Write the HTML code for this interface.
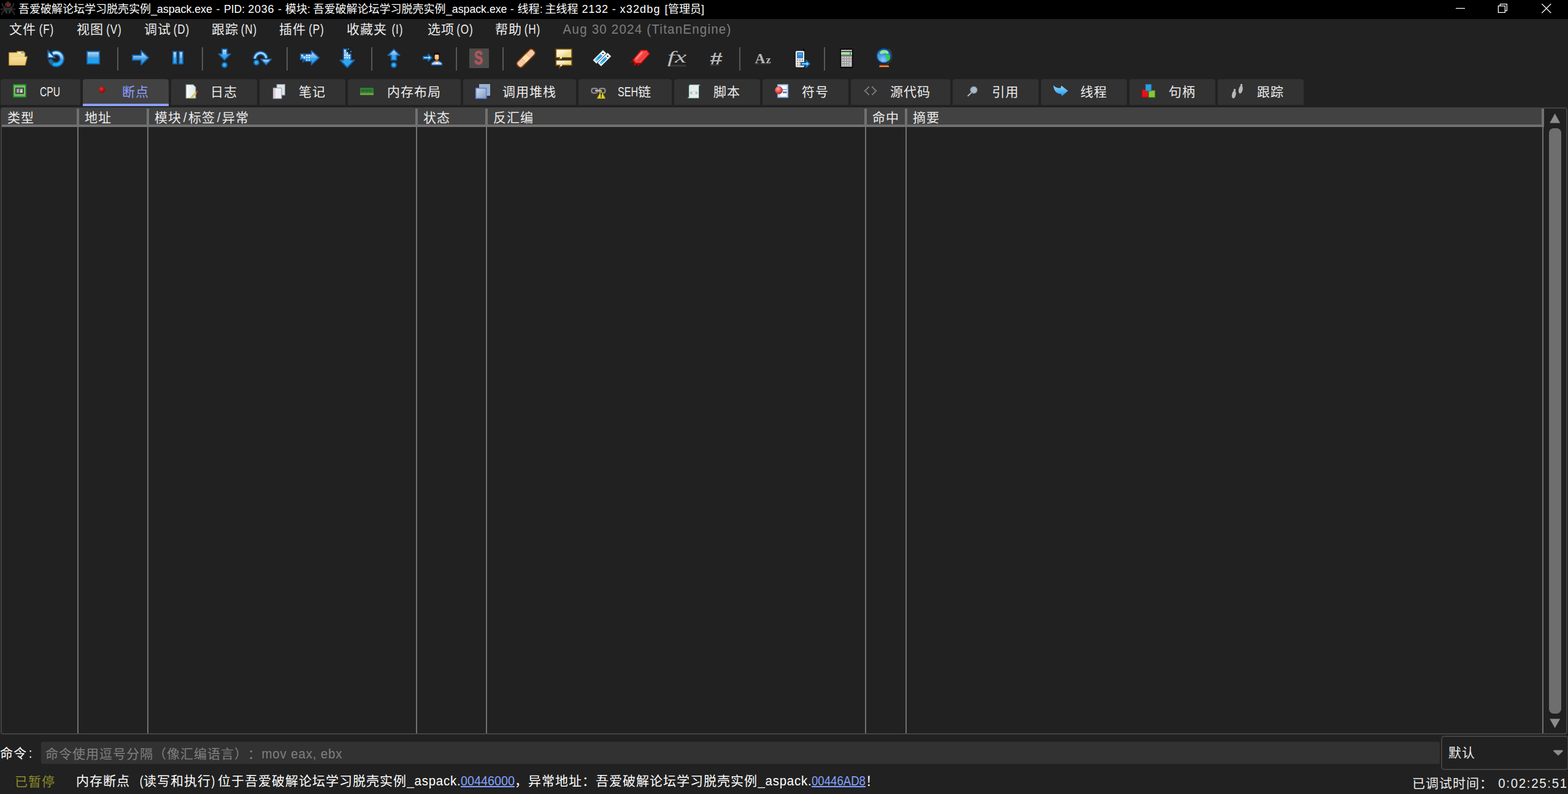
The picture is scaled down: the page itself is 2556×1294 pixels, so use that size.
<!DOCTYPE html>
<html lang="zh-CN">
<head>
<meta charset="utf-8">
<title>x32dbg</title>
<style>
*{box-sizing:border-box}
html,body{margin:0;padding:0}
html{background:#212121;overflow:hidden}
#app{position:absolute;left:0;top:0;width:2556px;height:1294px;overflow:hidden;background:#212121}
body{width:2556px;height:1294px;overflow:hidden;position:relative;background:#212121;color:#ececec;
 font-family:"Liberation Sans","Noto Sans CJK SC",sans-serif;font-size:22px;}
.a{position:absolute}
.t{position:absolute;white-space:pre;text-spacing-trim:space-all;height:30px;line-height:30px;font-size:21px;letter-spacing:1px;font-weight:400}
.q{display:inline-block;white-space:pre;line-height:1;vertical-align:baseline;letter-spacing:0;font-size:22px}
.q>span{display:inline-block;transform-origin:0 50%}
#title{left:0;top:0;width:2556px;height:31px;background:#000}
#title .tt{position:absolute;left:30px;top:0;height:31px;line-height:31px;font-size:18px;color:#fff;white-space:pre}
#title .q{font-size:18px}
.tab{position:absolute;top:129px;height:42px;background:#323232;border-radius:4px 4px 0 0}
.tab.sel{background:#424242;height:44px;border-bottom:4px solid #8c9eff;color:#8c9eff;border-radius:4px 4px 0 0}
.tab .t{top:6px}
.sep{position:absolute;top:77px;width:2px;height:38px;background:#585858}
.hs{position:absolute;top:177px;width:4px;height:30px;background:#717171}
.cl{position:absolute;top:207px;width:2px;height:988px;background:#717171}
a{color:#86a1ff;text-decoration:none;position:relative;display:inline-block;line-height:1}
a::after{content:"";position:absolute;left:0;right:0;bottom:1px;height:2px;background:#86a1ff}
</style>
</head>
<body>
<div id="app">
<div id="title" class="a"><svg class="a" style="left:0;top:0" width="27" height="27" viewBox="0 0 27 27"><g fill="none" stroke="#313131" stroke-width="1.9" stroke-linecap="round"><path d="M8.5 12.5 C5 11 3.7 8.5 3.7 5.6"/><path d="M17.5 12.5 C21 11 22.3 8.5 22.3 5.6"/><path d="M1.6 14.9 H24.4"/><path d="M7.5 17 C4.5 18.5 3 21 2.7 23.5"/><path d="M18.5 17 C21.5 18.5 23 21 23.3 23.5"/></g><path d="M13 2 C14.5 3.6 18.2 4.4 18.2 7.4 C18.2 10 15.9 11.4 13 11.4 C10.1 11.4 7.8 10 7.8 7.4 C7.8 4.4 11.5 3.6 13 2 Z" fill="#313131"/><path d="M5.8 11.5 C8.5 12.9 17.5 12.9 20.2 11.5 C19.6 15.6 18.4 19 16.6 21.3 L14 23.3 L13.7 14.2 H12.3 L12 23.3 L9.4 21.3 C7.6 19 6.4 15.6 5.8 11.5 Z" fill="#313131"/><text x="13.3" y="9.8" font-family="Liberation Sans,sans-serif" font-weight="700" font-size="5.8" fill="#e60000" text-anchor="middle" textLength="5.6" lengthAdjust="spacingAndGlyphs">52</text></svg><div class="tt">吾爱破解论坛学习脱壳实例<span class="l" style="letter-spacing:-0.1px;margin:0 0.05px 0 -0.05px">_aspack.exe</span><span class="l" style="letter-spacing:1px;margin:0 -0.5px 0 0.5px"> - </span><span class="q" style="width:34px"><span style="transform:scaleX(0.971)">PID:</span></span><span class="l" style="letter-spacing:0px;margin:0 0px 0 0px"> </span><span class="l" style="letter-spacing:0.74px;margin:0 -0.37px 0 0.37px">2036</span><span class="l" style="letter-spacing:0.67px;margin:0 -0.33px 0 0.33px"> - </span>模块<span class="q" style="width:9.5px"><span style="transform:scaleX(0.950)">: </span></span>吾爱破解论坛学习脱壳实例<span class="q" style="width:99.5px"><span style="transform:scaleX(0.984)">_aspack.exe</span></span><span class="l" style="letter-spacing:0.5px;margin:0 -0.25px 0 0.25px"> - </span>线程<span class="q" style="width:9px"><span style="transform:scaleX(0.900)">: </span></span>主线程<span class="l" style="letter-spacing:0.5px;margin:0 -0.25px 0 0.25px"> </span><span class="l" style="letter-spacing:0.86px;margin:0 -0.43px 0 0.43px">2132</span><span class="l" style="letter-spacing:0.83px;margin:0 -0.42px 0 0.42px"> - </span><span class="l" style="letter-spacing:1.16px;margin:0 -0.58px 0 0.58px">x32dbg</span><span class="l" style="letter-spacing:2px;margin:0 -1px 0 1px"> </span><span class="l" style="letter-spacing:1px;margin:0 -0.5px 0 0.5px">[</span>管理员<span class="l" style="letter-spacing:0px;margin:0 0px 0 0px">]</span></div><svg class="a" style="left:2360px;top:0" width="196" height="31" viewBox="2360 0 196 31" fill="none" stroke="#fff" stroke-width="1.25"><path d="M2373 13.6 H2388"/><path d="M2442.4 9.6 H2453.4 V20.4 H2442.4 Z M2445.4 9.6 V6.6 H2456.4 V17.4 H2453.4"/><path d="M2513.3 6.3 L2528.3 21.3 M2528.3 6.3 L2513.3 21.3"/></svg></div>
<div id="menu">
<div class="t" style="left:15px;top:33px">文件<span class="q" style="width:33px"><span style="transform:scaleX(0.78);letter-spacing:1px;padding-left:6.11px">(F)</span></span></div>
<div class="t" style="left:125px;top:33px">视图<span class="q" style="width:33px"><span style="transform:scaleX(0.78);letter-spacing:1px;padding-left:5.49px">(V)</span></span></div>
<div class="t" style="left:235px;top:33px">调试<span class="q" style="width:33px"><span style="transform:scaleX(0.78);letter-spacing:1px;padding-left:4.88px">(D)</span></span></div>
<div class="t" style="left:345px;top:33px">跟踪<span class="q" style="width:33px"><span style="transform:scaleX(0.78);letter-spacing:1px;padding-left:4.88px">(N)</span></span></div>
<div class="t" style="left:455px;top:33px">插件<span class="q" style="width:33px"><span style="transform:scaleX(0.78);letter-spacing:1px;padding-left:5.49px">(P)</span></span></div>
<div class="t" style="left:565px;top:33px">收藏夹<span class="q" style="width:33px"><span style="transform:scaleX(0.78);letter-spacing:1px;padding-left:9.77px">(I)</span></span></div>
<div class="t" style="left:697px;top:33px">选项<span class="q" style="width:33px"><span style="transform:scaleX(0.78);letter-spacing:1px;padding-left:4.27px">(O)</span></span></div>
<div class="t" style="left:807px;top:33px">帮助<span class="q" style="width:33px"><span style="transform:scaleX(0.78);letter-spacing:1px;padding-left:4.88px">(H)</span></span></div>
<div class="t" style="left:917px;top:33px;color:#7d7d7d"><span class="q" style="width:275px"><span style="transform:scaleX(0.93);letter-spacing:1.34px;padding-left:0.67px">Aug 30 2024 (TitanEngine)</span></span></div>
</div>
<div id="toolbar">
<svg class="a" style="left:0;top:70px" width="1480" height="50" viewBox="0 70 1480 50"><defs><linearGradient id="gb" x1="0" y1="0" x2="0" y2="1"><stop offset="0" stop-color="#b6e7ff"/><stop offset=".5" stop-color="#6db3ea"/><stop offset=".55" stop-color="#3f9fe6"/><stop offset="1" stop-color="#10b4ff"/></linearGradient><linearGradient id="gb2" x1="0" y1="0" x2="0" y2="1"><stop offset="0" stop-color="#a9e2ff"/><stop offset=".45" stop-color="#5aa5de"/><stop offset=".5" stop-color="#3d97db"/><stop offset="1" stop-color="#00adff"/></linearGradient><linearGradient id="gf" x1="0" y1="0" x2="0" y2="1"><stop offset="0" stop-color="#f6e09a"/><stop offset="1" stop-color="#ecc979"/></linearGradient><linearGradient id="gc" x1="0" y1="0" x2="1" y2="1"><stop offset="0" stop-color="#fffaec"/><stop offset=".4" stop-color="#faedc8"/><stop offset=".7" stop-color="#e6da86"/><stop offset="1" stop-color="#efe6ae"/></linearGradient><radialGradient id="gg" cx=".45" cy=".8" r=".9"><stop offset="0" stop-color="#8cc8ff"/><stop offset=".5" stop-color="#3a8fe0"/><stop offset="1" stop-color="#1662b8"/></radialGradient><linearGradient id="gt" x1="0" y1="0" x2="1" y2="0"><stop offset="0" stop-color="#7fd0f8"/><stop offset=".4" stop-color="#1a98e4"/><stop offset=".75" stop-color="#38b4f4"/><stop offset="1" stop-color="#c8ecff"/></linearGradient><radialGradient id="gd" cx=".45" cy=".4" r=".6"><stop offset="0" stop-color="#35c8ff"/><stop offset="1" stop-color="#1a8ee0"/></radialGradient></defs><path d="M14.6 85.6 H27.6 V83.6 H38.6 V85.6 H40.6 V92.2 H44.4 L41 106.4 H14.6 Z" fill="#e8c672" stroke="#a67c30" stroke-width="1.4" stroke-linejoin="round"/><path d="M15.4 86.6 H39.8 V92.6 H19.6 L15.4 105 Z" fill="#f1d98d"/><path d="M19.4 93 H43.6 L40.4 105.7 H15.6 Z" fill="url(#gf)"/><rect x="29" y="85" width="5.5" height="2" fill="#f6f2ea"/><rect x="34.5" y="85" width="3" height="2" fill="#4dbcf2"/><path d="M85.79 87.74 A9.6 9.6 0 1 1 81.74 96.44" fill="none" stroke="#1c63ad" stroke-width="8.4" opacity=".95"/><path d="M86.21 87.46 A9.6 9.6 0 1 1 81.79 96.94" fill="none" stroke="url(#gb)" stroke-width="4.6"/><path d="M86.79 104.08 A9.6 9.6 0 0 1 81.72 96.27" fill="none" stroke="#212121" stroke-width="9" opacity=".42"/><path d="M78.2 82.6 V94 H89.6 Z" fill="#b8e6ff" stroke="#1c63ad" stroke-width="2.2" stroke-linejoin="round"/><rect x="142" y="84" width="20" height="20" fill="url(#gb2)" stroke="#1c63ad" stroke-width="2"/><path d="M216 90 H230 V82.5 L242 94 L230 105.5 V98 H216 Z" fill="url(#gb)" stroke="#1c63ad" stroke-width="2" stroke-linejoin="round"/><rect x="282" y="84" width="6" height="20" fill="url(#gb)" stroke="#1c63ad" stroke-width="2" stroke-linejoin="round"/><rect x="292" y="84" width="6" height="20" fill="url(#gb)" stroke="#1c63ad" stroke-width="2" stroke-linejoin="round"/><path d="M362 80 H370 V88 H375.5 L366 97.8 L356.5 88 H362 Z" fill="url(#gb)" stroke="#1c63ad" stroke-width="2" stroke-linejoin="round"/><circle cx="366" cy="106" r="4" fill="url(#gd)" stroke="#1c63ad" stroke-width="2"/><path d="M415.51 95.92 A9.3 9.3 0 0 1 434.01 94.31" fill="none" stroke="#1c63ad" stroke-width="6.6"/><path d="M415.50 95.60 A9.3 9.3 0 0 1 434.06 94.79" fill="none" stroke="#9ad6fb" stroke-width="3"/><path d="M425.3 96.6 H442.2 L433.8 105.6 Z" fill="url(#gb)" stroke="#1c63ad" stroke-width="2" stroke-linejoin="round"/><circle cx="418" cy="102" r="4" fill="url(#gd)" stroke="#1c63ad" stroke-width="2"/><path d="M490 88 H495.5 V90 H497.5 V88 H507.5 V82.5 L520 94 L507.5 105.5 V100 H497.5 V98 H494 V96 H490 Z" fill="url(#gb)" stroke="#1c63ad" stroke-width="2" stroke-linejoin="round"/><rect x="491" y="89" width="2" height="2" fill="#d9f3ff"/><rect x="499" y="89" width="2" height="2" fill="#d9f3ff"/><rect x="503" y="89" width="2" height="2" fill="#d9f3ff"/><rect x="495" y="93" width="2" height="2" fill="#d9f3ff"/><rect x="499" y="93" width="2" height="2" fill="#d9f3ff"/><rect x="503" y="93" width="2" height="2" fill="#d9f3ff"/><rect x="499" y="97" width="2" height="2" fill="#d9f3ff"/><rect x="503" y="97" width="2" height="2" fill="#d9f3ff"/><rect x="489" y="95.5" width="2" height="2" fill="#2a7ac8"/><rect x="493" y="99.5" width="2" height="2" fill="#2a7ac8"/><path d="M560 80 H565 V86 H568 V88 H572 V98 H577.5 L566 110 L554.5 98 H560 Z" fill="url(#gb)" stroke="#1c63ad" stroke-width="2" stroke-linejoin="round"/><rect x="561" y="81" width="2" height="2" fill="#d9f3ff"/><rect x="565" y="85" width="2" height="2" fill="#d9f3ff"/><rect x="561" y="89" width="2" height="2" fill="#d9f3ff"/><rect x="565" y="89" width="2" height="2" fill="#d9f3ff"/><rect x="569" y="89" width="2" height="2" fill="#d9f3ff"/><rect x="561" y="93" width="2" height="2" fill="#d9f3ff"/><rect x="565" y="93" width="2" height="2" fill="#d9f3ff"/><rect x="569" y="93" width="2" height="2" fill="#d9f3ff"/><rect x="567" y="79" width="2" height="2" fill="#3a92e0"/><rect x="571" y="83" width="2" height="2" fill="#3a92e0"/><path d="M642 80.4 L651.6 90.3 H646.2 V98 H637.8 V90.3 H632.4 Z" fill="url(#gb)" stroke="#1c63ad" stroke-width="2" stroke-linejoin="round"/><circle cx="642" cy="106" r="4" fill="url(#gd)" stroke="#1c63ad" stroke-width="2"/><path d="M690 92 H698 V88.6 L704 94 L698 99.4 V96 H690 Z" fill="#7fdcff" stroke="#1c63ad" stroke-width="2" stroke-linejoin="round"/><path d="M703.5 106 V102.5 L708.5 99.5 H715.5 L720.5 102.5 V106 Z" fill="#b4d4f4" stroke="#1d5aa8" stroke-width="1.6"/><rect x="710.2" y="95" width="3.8" height="6.5" fill="#b9691c"/><rect x="711" y="101" width="2.4" height="3" fill="#fff"/><path d="M707 96 V88 C707 84 717 84 717 88 V96 H715.5 V90 H708.6 V96 Z" fill="#1e0d0a"/><rect x="708.6" y="89" width="6.8" height="7.6" rx="1.5" fill="#f3c791"/><rect x="765" y="79" width="32" height="32" fill="#4e4c4a"/><text x="780" y="105.2" font-family="Liberation Sans,sans-serif" font-weight="700" font-size="31" fill="#ae565c" stroke="#ae565c" stroke-width="1.2" text-anchor="middle" textLength="14" lengthAdjust="spacingAndGlyphs">S</text><g transform="rotate(-45 857.3 95)"><rect x="839.3" y="89.2" width="36" height="11.6" rx="4.6" fill="#f3c8a6" stroke="#7c3c0a" stroke-width="2"/><rect x="853" y="90.2" width="9" height="9.6" fill="#ffdfa6"/><path d="M852.3 92 V98 M863 92 V98" stroke="#f0a78a" stroke-width="1.4" stroke-dasharray="1.5 1.5"/></g><path d="M912 94 V97 L916 94" fill="#fff6dc" stroke="#80520e" stroke-width="1.6"/><rect x="906.3" y="80" width="25.7" height="14" fill="url(#gc)" stroke="#80520e" stroke-width="1.7"/><path d="M912.3 106 V110.5 L916 106" fill="#fff6dc" stroke="#80520e" stroke-width="1.6"/><rect x="906.3" y="98" width="25.7" height="8.4" fill="url(#gc)" stroke="#80520e" stroke-width="1.7"/><rect x="913" y="93" width="3" height="2.4" fill="#fff6dc"/><rect x="913.2" y="105.4" width="3" height="2.4" fill="#fff6dc"/><g transform="rotate(-45 977.6 92.6)"><rect x="967.1" y="89.6" width="21" height="6" fill="#249fe8" stroke="#24424a" stroke-width="3.6"/><rect x="967.1" y="89.6" width="21" height="6" fill="url(#gt)" stroke="#fff" stroke-width="1.8"/><rect x="982.1" y="89.6" width="6" height="6" fill="#fff"/><circle cx="985.2" cy="92.6" r="1.2" fill="#000"/></g><g transform="rotate(-45 985.2 97)"><rect x="974.7" y="94" width="21" height="6" fill="#249fe8" stroke="#24424a" stroke-width="3.6"/><rect x="974.7" y="94" width="21" height="6" fill="url(#gt)" stroke="#fff" stroke-width="1.8"/><rect x="989.7" y="94" width="6" height="6" fill="#fff"/><circle cx="992.8" cy="97" r="1.2" fill="#000"/></g><path d="M1027.2 99.7 H1033 V101.2 H1027.2 Z M1033.4 100 H1037 V107 H1033.4 Z M1039.2 101.6 H1042.3 V107 H1039.2 Z" fill="#b40404"/><path d="M1031.8 97.8 L1044.8 82 H1054.6 L1058.6 87.8 L1044.8 103 H1036 Z" fill="#f24a4a" stroke="#cc0808" stroke-width="1.6" stroke-linejoin="round"/><path d="M1040.4 99.4 L1054.6 86.4" stroke="#e82020" stroke-width="1.5" stroke-dasharray="2 1.5"/><path d="M1036.4 96.4 L1047 85" stroke="#ff8a8a" stroke-width="2.4"/><rect x="1089" y="105.6" width="29" height="3" fill="#393939"/><text x="1088" y="102.4" font-family="Liberation Serif,serif" font-style="italic" font-size="27.5" fill="#bcbcbc" textLength="31" lengthAdjust="spacingAndGlyphs">fx</text><rect x="1157" y="105.2" width="16" height="2" fill="#383838"/><text x="1167" y="105.4" font-family="Liberation Sans,sans-serif" font-style="italic" font-weight="700" font-size="28.5" fill="#b8b8b8" text-anchor="middle" textLength="21" lengthAdjust="spacingAndGlyphs">#</text><rect x="1230" y="103.4" width="26" height="1.6" fill="#343434"/><text x="1230.6" y="103" font-family="Liberation Serif,serif" font-weight="700" font-size="24" fill="#b8b8b8" textLength="17" lengthAdjust="spacingAndGlyphs">A</text><text x="1248.6" y="103" font-family="Liberation Serif,serif" font-weight="700" font-size="17.5" fill="#b8b8b8" textLength="8" lengthAdjust="spacingAndGlyphs">z</text><rect x="1309" y="79.4" width="2" height="4" fill="#050505"/><rect x="1297.5" y="83.5" width="13" height="25.5" rx="1" fill="#e4e2e0" stroke="#f6f4f2" stroke-width="1"/><rect x="1299.2" y="85.2" width="9.8" height="9.8" fill="#2c83d0"/><rect x="1301" y="87" width="6" height="3" fill="#5aa8e4"/><rect x="1299" y="97" width="2" height="2" fill="#8e8e8e"/><rect x="1303" y="97" width="2" height="2" fill="#8e8e8e"/><rect x="1307" y="97" width="2" height="2" fill="#8e8e8e"/><rect x="1299" y="101" width="2" height="2" fill="#8e8e8e"/><rect x="1303" y="101" width="2" height="2" fill="#8e8e8e"/><rect x="1307" y="101" width="2" height="2" fill="#8e8e8e"/><rect x="1299" y="105" width="2" height="2" fill="#8e8e8e"/><rect x="1303" y="105" width="2" height="2" fill="#8e8e8e"/><rect x="1307" y="105" width="2" height="2" fill="#8e8e8e"/><path d="M1306 102 H1314 V98.2 L1320 104 L1314 109.8 V106 H1306 Z" fill="#74dcff" stroke="#1c63ad" stroke-width="2" stroke-linejoin="round"/><rect x="1369.5" y="79.5" width="21" height="31.3" fill="#000"/><rect x="1371" y="81" width="18" height="28" fill="#9b9b9b"/><rect x="1371" y="81" width="18" height="2" fill="#b9b9b9"/><rect x="1371" y="83" width="18" height="2" fill="#565456"/><rect x="1371" y="85" width="18" height="4" fill="#a2e2a2"/><rect x="1385" y="85" width="2" height="4" fill="#5c9a5c"/><rect x="1371" y="89" width="18" height="2" fill="#6e6c6e"/><rect x="1373" y="93" width="2.2" height="2.2" fill="#d6d6d6"/><rect x="1377" y="93" width="2.2" height="2.2" fill="#d6d6d6"/><rect x="1381" y="93" width="2.2" height="2.2" fill="#d6d6d6"/><rect x="1385" y="93" width="2.2" height="2.2" fill="#d6d6d6"/><rect x="1373" y="97" width="2.2" height="2.2" fill="#d6d6d6"/><rect x="1377" y="97" width="2.2" height="2.2" fill="#d6d6d6"/><rect x="1381" y="97" width="2.2" height="2.2" fill="#d6d6d6"/><rect x="1385" y="97" width="2.2" height="2.2" fill="#d6d6d6"/><rect x="1373" y="101" width="2.2" height="2.2" fill="#d6d6d6"/><rect x="1377" y="101" width="2.2" height="2.2" fill="#d6d6d6"/><rect x="1381" y="101" width="2.2" height="2.2" fill="#d6d6d6"/><rect x="1373" y="105" width="2.2" height="2.2" fill="#d6d6d6"/><rect x="1377" y="105" width="2.2" height="2.2" fill="#d6d6d6"/><rect x="1381" y="105" width="2.2" height="2.2" fill="#d6d6d6"/><rect x="1385" y="101" width="2.2" height="6.2" fill="#cfcfcf"/><path d="M1448 79.5 C1456 84 1456 98 1446 104.5" fill="none" stroke="#3a3a3a" stroke-width="1.8"/><circle cx="1440.8" cy="91" r="11.4" fill="url(#gg)" stroke="#0e4c96" stroke-width="1.6"/><path d="M1434 86 C1435 82 1440 81 1443 82 C1447 82 1449 85 1448 87 C1446 89 1444 86 1441 87 C1438 88 1435 89 1434 86 Z" fill="#8de89a"/><path d="M1445 89 C1448 88 1451 91 1451 95 C1450 98 1448 100 1446 99 C1447 96 1444 94 1443 91 Z" fill="#2fd238"/><path d="M1431 89 C1433 88 1434 90 1433 92 C1432 92 1431 91 1431 89 Z" fill="#3fc870"/><rect x="1434" y="105.4" width="14" height="2" fill="#8a3a00"/><rect x="1433.4" y="107.2" width="15.6" height="2" fill="#f2a766"/><rect x="1433.4" y="109.2" width="15.6" height="1.6" fill="#6c1600"/></svg>
<div class="sep" style="left:191px"></div>
<div class="sep" style="left:329px"></div>
<div class="sep" style="left:467px"></div>
<div class="sep" style="left:605px"></div>
<div class="sep" style="left:743px"></div>
<div class="sep" style="left:819px"></div>
<div class="sep" style="left:1205px"></div>
<div class="sep" style="left:1343px"></div>
</div>
<div id="tabs">
<div class="tab" style="left:1px;width:130px"><div class="t" style="left:64px"><span class="q" style="width:33px"><span style="transform:scaleX(0.71)">CPU</span></span></div></div>
<div class="tab sel" style="left:135px;width:140px"><div class="t" style="left:64px">断点</div></div>
<div class="tab" style="left:279px;width:140px"><div class="t" style="left:64px">日志</div></div>
<div class="tab" style="left:423px;width:140px"><div class="t" style="left:64px">笔记</div></div>
<div class="tab" style="left:567px;width:184px"><div class="t" style="left:64px">内存布局</div></div>
<div class="tab" style="left:755px;width:184px"><div class="t" style="left:64px">调用堆栈</div></div>
<div class="tab" style="left:943px;width:152px"><div class="t" style="left:64px"><span class="q" style="width:33px"><span style="transform:scaleX(0.729)">SEH</span></span>链</div></div>
<div class="tab" style="left:1099px;width:140px"><div class="t" style="left:64px">脚本</div></div>
<div class="tab" style="left:1243px;width:140px"><div class="t" style="left:64px">符号</div></div>
<div class="tab" style="left:1387px;width:162px"><div class="t" style="left:64px">源代码</div></div>
<div class="tab" style="left:1553px;width:140px"><div class="t" style="left:64px">引用</div></div>
<div class="tab" style="left:1697px;width:140px"><div class="t" style="left:64px">线程</div></div>
<div class="tab" style="left:1841px;width:140px"><div class="t" style="left:64px">句柄</div></div>
<div class="tab" style="left:1985px;width:140px"><div class="t" style="left:64px">跟踪</div></div>
<svg class="a" style="left:0;top:129px" width="2130" height="44" viewBox="0 129 2130 44"><defs><radialGradient id="rr" cx=".4" cy=".35" r=".7"><stop offset="0" stop-color="#e23a3a"/><stop offset=".45" stop-color="#c41414"/><stop offset="1" stop-color="#8a0606"/></radialGradient><radialGradient id="rs" cx=".4" cy=".35" r=".75"><stop offset="0" stop-color="#ffb0a8"/><stop offset=".6" stop-color="#d84040"/><stop offset="1" stop-color="#a81818"/></radialGradient><linearGradient id="sq" x1="0" y1="0" x2="1" y2="1"><stop offset="0" stop-color="#d4e0ee"/><stop offset="1" stop-color="#7e9abf"/></linearGradient><linearGradient id="pg" x1="0" y1="0" x2="1" y2="0"><stop offset="0" stop-color="#fafcfc"/><stop offset="1" stop-color="#dce8e8"/></linearGradient><linearGradient id="th" x1="0" y1="0" x2="0" y2="1"><stop offset="0" stop-color="#9ad4ff"/><stop offset="1" stop-color="#1a9cf0"/></linearGradient></defs><rect x="21" y="137" width="22" height="22" fill="#22802a"/><rect x="22.6" y="138.6" width="18.8" height="18.8" fill="#4cb254"/><rect x="24" y="140.6" width="16" height="14.4" fill="none" stroke="#c4c870" stroke-width="1.6" stroke-dasharray="1.6 1.2"/><rect x="25" y="143" width="14" height="10" fill="#3e3e3e"/><rect x="27" y="144.6" width="4.4" height="6.6" fill="#a2a2a2"/><rect x="32.6" y="144.6" width="4.4" height="6.6" fill="#b4b4b4"/><rect x="33.4" y="148" width="2.4" height="2.4" fill="#fff"/><circle cx="166.2" cy="146.2" r="5.2" fill="url(#rr)"/><path d="M303 137.6 H315 L319.2 141.8 V160.4 H303 Z" fill="url(#pg)" stroke="#52706e" stroke-width="1.2"/><path d="M311.5 159.6 L319.6 151" stroke="#d8c658" stroke-width="3.2"/><rect x="319.6" y="148" width="2.6" height="3" fill="#c8343c"/><rect x="451.2" y="137.6" width="13.2" height="17.4" fill="#e2e6ec" stroke="#8a9a9c" stroke-width="1.2"/><rect x="445.4" y="143.4" width="13.6" height="17.2" fill="#eceef8" stroke="#97a5a7" stroke-width="1.2"/><rect x="447" y="144.4" width="1.4" height="15.4" fill="#f2a2ac"/><rect x="587" y="143" width="22" height="12" fill="#2a802c"/><rect x="589.4" y="146" width="4.4" height="3.6" fill="#3c5a42"/><rect x="595.4" y="146" width="4.4" height="3.6" fill="#3c5a42"/><rect x="601.4" y="146" width="4.4" height="3.6" fill="#3c5a42"/><rect x="587" y="151.4" width="22" height="3.6" fill="#6e9e40"/><rect x="781" y="137" width="18" height="19" fill="#9cb2ca"/><rect x="775.7" y="143.7" width="17" height="16.6" fill="url(#sq)" stroke="#5c7ee0" stroke-width="1.6"/><rect x="964.4" y="144.2" width="9.4" height="7.4" rx="3" fill="none" stroke="#8c8c8c" stroke-width="2.2"/><rect x="977" y="144.2" width="9.4" height="7.4" rx="3" fill="none" stroke="#8c8c8c" stroke-width="2.2"/><rect x="970" y="146.6" width="11" height="2.4" fill="#bcbcbc"/><path d="M980 148 L986.6 160.4 H973.4 Z" fill="#e0d228" stroke="#a89a08" stroke-width="1"/><rect x="979.2" y="151" width="1.8" height="5" fill="#222"/><rect x="979.2" y="157" width="1.8" height="1.8" fill="#222"/><path d="M1124 137.6 H1141 V140 H1139.6 V160.4 H1121 V158 H1122.6 V140 Z" fill="#e4eeec" stroke="#32504e" stroke-width="1.2"/><rect x="1125" y="149.4" width="12" height="4" fill="#b8bcbc"/><rect x="1128.4" y="150" width="5" height="3" fill="#eef2f2"/><rect x="1267.5" y="137.6" width="17.2" height="21.4" fill="#cddcf4" stroke="#6e8cbc" stroke-width="1.2"/><rect x="1272" y="140" width="10" height="17" fill="#fff"/><rect x="1276" y="149" width="6.5" height="3" fill="#4a86e0"/><rect x="1276" y="145" width="6.5" height="2" fill="#8ab0ec"/><circle cx="1269.6" cy="147" r="6.4" fill="url(#rs)"/><path d="M1416.4 141.4 L1410 148 L1416.4 154.6 M1421.6 141.4 L1428 148 L1421.6 154.6" fill="none" stroke="#9a9a9a" stroke-width="2.2" stroke-dasharray="1.8 1"/><path d="M1583.4 151 L1577.4 156.8" stroke="#b8b8b8" stroke-width="2"/><circle cx="1587.4" cy="146.6" r="5.6" fill="#a9b9cd" stroke="#7c8896" stroke-width="1"/><path d="M1717 139 C1721 143.4 1725 144 1729 143.4 L1730 139.6 L1741 148 L1731 156.4 L1729.4 153 C1722 153 1718 148 1717 139 Z" fill="url(#th)"/><rect x="1861.6" y="146" width="10.4" height="12.4" fill="#e2121e" stroke="#a80c12" stroke-width="1.2"/><rect x="1872.6" y="147.6" width="10" height="11" fill="#86c83c" stroke="#4e9018" stroke-width="1.2"/><rect x="1867.6" y="137.6" width="9" height="10.4" fill="#2e9fdc" stroke="#1b7cbc" stroke-width="1.2"/><g fill="#b8b8b8"><ellipse cx="2022.4" cy="146" rx="3.2" ry="6.6" transform="rotate(12 2022.4 146)"/><circle cx="2023.6" cy="138.6" r="1.8"/><ellipse cx="2011.4" cy="154" rx="3.2" ry="6.4" transform="rotate(12 2011.4 154)"/><circle cx="2012.6" cy="146.6" r="1.8"/></g></svg>
</div>
<div id="table">
<div class="a" style="left:1px;top:175px;width:2554px;height:1022px;border:2px solid #424242;border-radius:4px"></div>
<div class="a" style="left:2px;top:176px;width:2511px;height:27px;background:#424242;border-radius:3px 0 0 0"></div>
<div class="a" style="left:3px;top:203px;width:2512px;height:4px;background:#717171"></div>
<div class="t" style="left:12px;top:177px">类型</div>
<div class="t" style="left:138px;top:177px">地址</div>
<div class="t" style="left:252px;top:177px">模块<span class="q" style="width:11px"><span style="transform:scaleX(0.93);letter-spacing:5.72px;padding-left:2.86px">/</span></span>标签<span class="q" style="width:11px"><span style="transform:scaleX(0.93);letter-spacing:5.72px;padding-left:2.86px">/</span></span>异常</div>
<div class="t" style="left:690px;top:177px">状态</div>
<div class="t" style="left:804px;top:177px">反汇编</div>
<div class="t" style="left:1422px;top:177px">命中</div>
<div class="t" style="left:1488px;top:177px">摘要</div>
<div class="hs" style="left:125px"></div>
<div class="hs" style="left:239px"></div>
<div class="hs" style="left:677px"></div>
<div class="hs" style="left:791px"></div>
<div class="hs" style="left:1409px"></div>
<div class="hs" style="left:1475px"></div>
<div class="hs" style="left:2513px"></div>
<div class="cl" style="left:126px"></div>
<div class="cl" style="left:240px"></div>
<div class="cl" style="left:678px"></div>
<div class="cl" style="left:792px"></div>
<div class="cl" style="left:1410px"></div>
<div class="cl" style="left:1476px"></div>
<div class="cl" style="left:2514px"></div>
<svg class="a" style="left:2517px;top:177px" width="36" height="1018" viewBox="0 0 36 1018"><path d="M17.7 8 L26.2 23.5 L9.2 23.5 Z" fill="#8c8c8c"/><rect x="8" y="32" width="20" height="954" rx="7.5" ry="7.5" fill="#6e6e6e"/><path d="M9.2 994.5 L26.2 994.5 L17.7 1009.5 Z" fill="#8c8c8c"/></svg>
</div>
<div id="cmd">
<div class="t" style="left:0;top:1213px;color:#fff">命令<span class="q" style="width:11px"><span style="transform:scaleX(0.93);letter-spacing:5.72px;padding-left:2.86px">:</span></span></div>
<div class="a" style="left:67px;top:1209px;width:2280px;height:36px;background:#323232;border-radius:3px"></div>
<div class="t" style="left:74px;top:1214px;color:#808080">命令使用逗号分隔（像汇编语言）：<span class="q" style="width:132px"><span style="transform:scaleX(0.93);letter-spacing:0.92px;padding-left:0.46px">mov eax, ebx</span></span></div>
<div class="a" style="left:2349px;top:1199px;width:208px;height:56px;border:2px solid #424242;border-radius:5px"></div>
<div class="t" style="left:2361px;top:1212px">默认</div>
<svg class="a" style="left:2532px;top:1222px" width="16" height="10" viewBox="0 0 16 10"><path d="M0.5 0.5 H15.5 V2.5 L8 9.5 L0.5 2.5 Z" fill="#8c8c8c"/></svg>
</div>
<div id="status">
<div class="t" style="left:24px;top:1259px;color:#8d8b2a">已暂停</div>
<div class="t" style="left:124px;top:1258px;color:#fff;font-weight:400">内存断点<span class="q" style="width:22px"><span style="transform:scaleX(0.78);padding-left:14.17px"> (</span></span>读写和执行<span class="q" style="width:11px"><span style="transform:scaleX(0.78);padding-left:0.6px">)</span></span>位于吾爱破解论坛学习脱壳实例<span class="q" style="width:88px"><span style="transform:scaleX(0.93);letter-spacing:0.82px;padding-left:0.41px">_aspack.</span></span><a><span class="q" style="width:88px"><span style="transform:scaleX(0.899)">00446000</span></span></a>，异常地址：吾爱破解论坛学习脱壳实例<span class="q" style="width:88px"><span style="transform:scaleX(0.93);letter-spacing:0.82px;padding-left:0.41px">_aspack.</span></span><a><span class="q" style="width:88px"><span style="transform:scaleX(0.846)">00446AD8</span></span></a>！</div>
<div class="t" style="left:2302px;top:1262px">已调试时间：<span class="q" style="width:121px"><span style="transform:scaleX(0.93);letter-spacing:1.82px;padding-left:0.91px"> 0:02:25:51</span></span></div>
</div>
</div>
</body>
</html>
